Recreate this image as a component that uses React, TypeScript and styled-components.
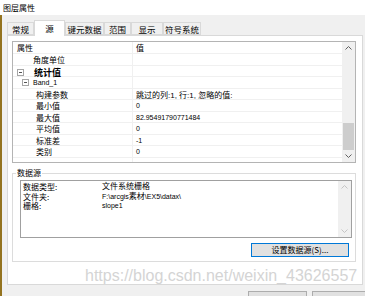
import styled, { createGlobalStyle } from 'styled-components';

const GlobalStyle = createGlobalStyle`
  html, body {
    margin: 0;
    padding: 0;
    background: #f0f0f0;
  }
  body {
    font-family: "Noto Sans CJK SC", "Liberation Sans", sans-serif;
    color: #000;
  }
  * {
    box-sizing: border-box;
  }
`;

const Window = styled.div`
    position: relative;
    width: 365px;
    height: 296px;
    overflow: hidden;
    display: flex;
    flex-direction: column;
`;

const TitleBar = styled.div`
    height: 15px;
    background: #fff;
    padding-left: 3px;
    font-size: 8px;
    line-height: 15px;
`;

const Body = styled.div`
    flex: 1;
    display: flex;
    flex-direction: column;
    border-left: 2px solid #94731f;
    padding: 5px 2px 0 5px;
`;

const TabRow = styled.div`
    display: flex;
    align-items: flex-end;
    height: 15px;
    position: relative;
    z-index: 1;
`;

const Tab = styled.div<{ $w: number; $active?: boolean }>`
    width: ${p => p.$w}px;
    height: ${p => (p.$active ? 16 : 13)}px;
    margin-bottom: ${p => (p.$active ? -1 : 0)}px;
    background: ${p => (p.$active ? '#fff' : '#f0f0f0')};
    border: 1px solid #d9d9d9;
    border-bottom: ${p => (p.$active ? 'none' : '1px solid #d9d9d9')};
    font-size: 8.5px;
    line-height: ${p => (p.$active ? 15 : 12)}px;
    text-align: center;
    white-space: nowrap;
`;

const Panel = styled.div`
    height: 250px;
    background: #fff;
    border: 1px solid #d9d9d9;
    padding: 5px 4px 0 4px;
    display: flex;
    flex-direction: column;
`;

const Grid = styled.div`
    width: 344px;
    height: 122px;
    border: 1px solid #b4b4b4;
    display: flex;
`;

const GridBody = styled.div`
    flex: 1;
    overflow: hidden;
`;

const Row = styled.div<{ $h: number }>`
    display: grid;
    grid-template-columns: 120px 1fr;
    height: ${p => p.$h}px;
    border-bottom: 1px solid #f0f0f0;
`;

const LabelCell = styled.div<{ $indent: number; $bold?: boolean; $latin?: boolean }>`
    display: flex;
    align-items: center;
    padding-left: ${p => p.$indent}px;
    border-right: 1px solid #f0f0f0;
    font-size: ${p => (p.$bold ? 9 : p.$latin ? 7 : 8)}px;
    font-weight: ${p => (p.$bold ? 700 : 400)};
    font-family: ${p => (p.$latin ? '"Liberation Sans", sans-serif' : 'inherit')};
    white-space: nowrap;
`;

const ValueCell = styled.div<{ $latin?: boolean }>`
    display: flex;
    align-items: center;
    padding-left: 3px;
    font-size: ${p => (p.$latin ? 7 : 8)}px;
    font-family: "Liberation Sans", "Noto Sans CJK SC", sans-serif;
    white-space: nowrap;
`;

const Toggle = styled.span<{ $gap: number }>`
    display: inline-flex;
    align-items: center;
    justify-content: center;
    width: 7px;
    height: 7px;
    margin-right: ${p => p.$gap}px;
    border: 1px solid #a6a6a6;
    &::after {
        content: '';
        width: 3px;
        height: 1px;
        background: #555;
    }
`;

const ScrollBar = styled.div<{ $w: number }>`
    width: ${p => p.$w}px;
    background: #f0f0f0;
    display: flex;
    flex-direction: column;
`;

const ArrowBox = styled.div`
    height: 12px;
    display: flex;
    align-items: center;
    justify-content: center;
`;

const Track = styled.div`
    flex: 1;
    display: flex;
    flex-direction: column;
    justify-content: flex-end;
`;

const Thumb = styled.div`
    height: 27px;
    margin: 0 1px;
    background: #cdcdcd;
`;

const GroupBox = styled.fieldset`
    width: 344px;
    min-width: 0;
    margin: 5px 0 0;
    padding: 2px 3px 4px 7px;
    border: 1px solid #dcdcdc;
`;

const Legend = styled.legend`
    font-size: 8px;
    line-height: 10px;
    padding: 0 1px;
    margin-left: -4px;
`;

const TextBox = styled.div`
    height: 58px;
    border: 1px solid #a0a0a0;
    display: flex;
`;

const InfoList = styled.div`
    flex: 1;
    display: grid;
    grid-template-columns: 79px 1fr;
    align-content: start;
    padding: 1px 0 0 2px;
    font-size: 8px;
    line-height: 9.5px;
`;

const InfoValue = styled.span<{ $latin?: boolean }>`
    font-size: ${p => (p.$latin ? 7 : 8)}px;
    font-family: "Liberation Sans", "Noto Sans CJK SC", sans-serif;
    white-space: nowrap;
`;

const ButtonLine = styled.div`
    display: flex;
    justify-content: flex-end;
    margin-top: 5px;
    padding-right: 3px;
`;

const SourceButton = styled.button`
    width: 98px;
    height: 14px;
    padding: 0;
    border: 1px solid #0078d7;
    background: #e1e1e1;
    font-family: inherit;
    font-size: 8px;
    line-height: 12px;
    color: #000;
`;

const BottomButtons = styled.div`
    display: flex;
    gap: 5px;
    margin-top: 6px;
    padding-left: 241px;
`;

const DialogButton = styled.div`
    flex-shrink: 0;
    width: 59px;
    height: 22px;
    border: 1px solid #adadad;
    background: #e1e1e1;
`;

const Watermark = styled.div`
    position: absolute;
    left: 85px;
    top: 266px;
    font-family: "Liberation Sans", Arial, sans-serif;
    font-size: 16px;
    line-height: 19px;
    color: #d4d4d4;
    pointer-events: none;
    white-space: nowrap;
`;

function Chevron({ down, color }: { down?: boolean; color: string }) {
    return (
        <svg width="7" height="4" viewBox="0 0 7 4">
            <polyline
                points={down ? '0.5,0.5 3.5,3.5 6.5,0.5' : '0.5,3.5 3.5,0.5 6.5,3.5'}
                fill="none"
                stroke={color}
                strokeWidth="1"
            />
        </svg>
    );
}

type Prop = {
    label: string;
    value?: string;
    indent: number;
    toggle?: number;
    bold?: boolean;
    latin?: boolean;
    latinValue?: boolean;
};

const props: Prop[] = [
    { label: '角度单位', indent: 20 },
    { label: '统计值', indent: 4, toggle: 10, bold: true },
    { label: 'Band_1', indent: 9, toggle: 4, latin: true },
    { label: '构建参数', value: '跳过的列:1, 行:1, 忽略的值:', indent: 23 },
    { label: '最小值', value: '0', indent: 23, latinValue: true },
    { label: '最大值', value: '82.95491790771484', indent: 23, latinValue: true },
    { label: '平均值', value: '0', indent: 23, latinValue: true },
    { label: '标准差', value: '-1', indent: 23, latinValue: true },
    { label: '类别', value: '0', indent: 23, latinValue: true },
    { label: '', indent: 23 },
];

const tabs = [
    { name: '常规', w: 27 },
    { name: '源', w: 31, active: true },
    { name: '键元数据', w: 39 },
    { name: '范围', w: 27 },
    { name: '显示', w: 32 },
    { name: '符号系统', w: 38 },
];

export default function App() {
    return (
        <Window>
            <GlobalStyle />
            <TitleBar>图层属性</TitleBar>
            <Body>
                <TabRow>
                    {tabs.map(t => (
                        <Tab key={t.name} $w={t.w} $active={t.active}>{t.name}</Tab>
                    ))}
                </TabRow>
                <Panel>
                    <Grid>
                        <GridBody>
                            <Row $h={12}>
                                <LabelCell $indent={4}>属性</LabelCell>
                                <ValueCell>值</ValueCell>
                            </Row>
                            {props.map((p, i) => (
                                <Row key={i} $h={11.5}>
                                    <LabelCell $indent={p.indent} $bold={p.bold} $latin={p.latin}>
                                        {p.toggle !== undefined && <Toggle $gap={p.toggle} />}
                                        {p.label}
                                    </LabelCell>
                                    <ValueCell $latin={p.latinValue}>{p.value}</ValueCell>
                                </Row>
                            ))}
                        </GridBody>
                        <ScrollBar $w={13}>
                            <ArrowBox><Chevron color="#606060" /></ArrowBox>
                            <Track><Thumb /></Track>
                            <ArrowBox><Chevron down color="#606060" /></ArrowBox>
                        </ScrollBar>
                    </Grid>

                    <GroupBox>
                        <Legend>数据源</Legend>
                        <TextBox>
                            <InfoList>
                                <span>数据类型:</span>
                                <InfoValue>文件系统栅格</InfoValue>
                                <span>文件夹:</span>
                                <InfoValue $latin>{'F:\\arcgis'}<InfoValue>素材</InfoValue>{'\\EX5\\datax\\'}</InfoValue>
                                <span>栅格:</span>
                                <InfoValue $latin>slope1</InfoValue>
                            </InfoList>
                            <ScrollBar $w={13}>
                                <ArrowBox><Chevron color="#c4c4c4" /></ArrowBox>
                                <Track />
                                <ArrowBox><Chevron down color="#c4c4c4" /></ArrowBox>
                            </ScrollBar>
                        </TextBox>
                        <ButtonLine>
                            <SourceButton>设置数据源(S)...</SourceButton>
                        </ButtonLine>
                    </GroupBox>
                </Panel>
                <BottomButtons>
                    <DialogButton />
                    <DialogButton />
                </BottomButtons>
            </Body>
            <Watermark>https://blog.csdn.net/weixin_43626557</Watermark>
        </Window>
    );
}
